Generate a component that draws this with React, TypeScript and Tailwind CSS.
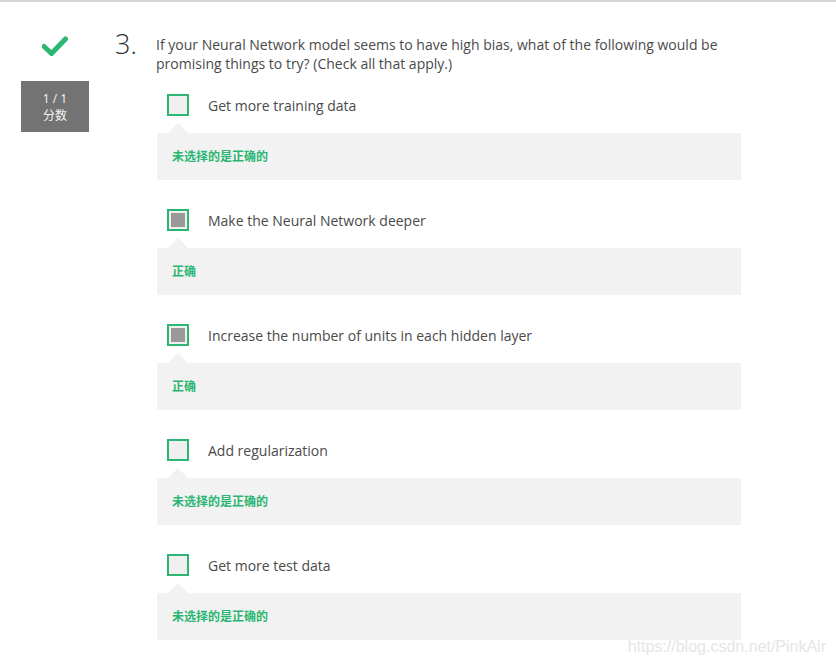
import React from 'react';

interface Option {
  label: string;
  checked: boolean;
  feedback: string;
}

const options: Option[] = [
  { label: 'Get more training data', checked: false, feedback: '未选择的是正确的' },
  { label: 'Make the Neural Network deeper', checked: true, feedback: '正确' },
  { label: 'Increase the number of units in each hidden layer', checked: true, feedback: '正确' },
  { label: 'Add regularization', checked: false, feedback: '未选择的是正确的' },
  { label: 'Get more test data', checked: false, feedback: '未选择的是正确的' },
];

const font = { fontFamily: '"Open Sans", "Noto Sans CJK SC", sans-serif' };

const App: React.FC = () => {
  return (
    <div className="w-[836px] h-[666px] bg-white relative overflow-hidden" style={font}>
      <div className="h-[3px] border-t-2 border-[#d4d4d4]" />
      <div className="flex">
        {/* Left column: status + score */}
        <div className="w-[110px] shrink-0 flex flex-col items-center pt-[33px]">
          <div className="w-[68px] flex justify-center">
            <svg width="26" height="20" viewBox="0 0 26 20">
              <path d="M2 10.5 L9.5 17.5 L23.5 3" fill="none" stroke="#2bb673" strokeWidth="5" strokeLinecap="round" strokeLinejoin="round" />
            </svg>
          </div>
          <div className="mt-[25px] w-[68px] h-[51px] bg-[#737373] text-[#f5f5f5] text-[12px] leading-[17px] flex flex-col items-center justify-center">
            <span>1 / 1</span>
            <span>分数</span>
          </div>
        </div>

        {/* Question */}
        <div className="flex-1 pt-[26px]">
          <div className="flex">
            <div className="w-[46px] shrink-0 text-[27px] font-light text-[#333] leading-[30px] pl-[5px]">3.</div>
            <div className="w-[590px] pt-[6px] text-[14px] leading-[19px] text-[#4a4a4a]">
              If your Neural Network model seems to have high bias, what of the following would be promising things to try? (Check all that apply.)
            </div>
          </div>

          <div className="ml-[47px] mt-[21px] flex flex-col gap-[29px] w-[584px]">
            {options.map((opt, i) => (
              <div key={i}>
                <div className="flex items-center h-[22px] pl-[10px]">
                  <div className="w-[22px] h-[22px] border-2 border-[#2bb673] bg-[#f0f0f0] p-[2px] shrink-0">
                    {opt.checked && <div className="w-full h-full bg-[#999]" />}
                  </div>
                  <span className="ml-[19px] text-[14px] text-[#4a4a4a]">{opt.label}</span>
                </div>
                <div className="relative mt-[17px] h-[47px] bg-[#f2f2f2] flex items-center pl-[15px]">
                  <div className="absolute -top-[10px] left-[11px] w-0 h-0 border-l-[10px] border-r-[10px] border-b-[10px] border-l-transparent border-r-transparent border-b-[#f2f2f2]" />
                  <span className="text-[12px] font-bold text-[#2bb673]">{opt.feedback}</span>
                </div>
              </div>
            ))}
          </div>
        </div>
      </div>
      <div className="absolute right-[10px] bottom-[7px] text-[16px] text-[#e6e6e6]" style={{ fontFamily: '"Liberation Sans", Arial, sans-serif' }}>
        https://blog.csdn.net/PinkAir
      </div>
    </div>
  );
};

export default App;
